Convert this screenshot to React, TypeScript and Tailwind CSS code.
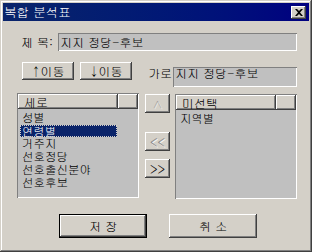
import React from 'react';

const raised =
  'bg-[#d4d0c8] shadow-[inset_-1px_-1px_#404040,inset_1px_1px_#ffffff,inset_-2px_-2px_#808080,inset_2px_2px_#d4d0c8]';
const defaultBtn =
  'bg-[#d4d0c8] shadow-[inset_0_0_0_1px_#000000,inset_-2px_-2px_#404040,inset_2px_2px_#ffffff,inset_-3px_-3px_#808080]';
const sunken = 'bg-[#c0c0c0] shadow-[inset_1px_1px_#808080,inset_-1px_-1px_#ffffff]';
const header =
  'bg-[#d4d0c8] shadow-[inset_-1px_-1px_#404040,inset_1px_1px_#ffffff,inset_-2px_-2px_#808080]';
const disabledText = 'text-[#808080] [text-shadow:1px_1px_0_#ffffff]';

const leftItems = ['성별', '연령별', '거주지', '선호정당', '선호출신분야', '선호후보'];

const ListBox = ({ title, items, selected }: { title: string; items: string[]; selected?: number }) => {
  return <div className={`w-[122px] h-[105px] flex flex-col pl-[1px] pt-[1px] ${sunken}`}>
      <div className="flex h-[15px] shrink-0">
        <div className={`w-[100px] h-[15px] pl-[6px] leading-[15px] ${header}`}>{title}</div>
        <div className={`w-[20px] h-[15px] ${header}`} />
      </div>
      <div className="pt-[2px] flex flex-col">
        {items.map((item, i) => <div key={item} className="h-[13px] flex items-center">
            {i === selected ? <div className="ml-[2px] w-[97px] h-[12px] bg-[#0a246a] text-white text-[11.5px] leading-[12px] pl-[2px] outline-1 outline-dotted outline-[#d4d0c8] -outline-offset-1">
                {item}
              </div> : <div className="pl-[4px] text-[11.5px] leading-[13px]">{item}</div>}
          </div>)}
      </div>
    </div>;
};

export default function App() {
  return <div className="w-[312px] h-[252px] bg-[#d4d0c8] p-[3px] flex flex-col text-[12px] text-black font-['Gulim','Noto_Sans_CJK_KR',sans-serif] shadow-[inset_-1px_-1px_#404040,inset_1px_1px_#d4d0c8,inset_-2px_-2px_#808080,inset_2px_2px_#ffffff]">
      {/* title bar */}
      <div className="h-[18px] flex items-center bg-gradient-to-r from-[#0a246a] to-[#000080] pl-[1px] pr-[3px]">
        <span className="text-white text-[12.5px] leading-[18px]">복합 분석표</span>
        <div className={`ml-auto w-[15px] h-[13px] flex items-center justify-center ${raised}`}>
          <svg width="8" height="7" viewBox="0 0 8 7">
            <path d="M0 0h2l2 2 2-2h2L5 3.5 8 7H6L4 5 2 7H0l3-3.5z" fill="#000" />
          </svg>
        </div>
      </div>

      {/* 제목 */}
      <div className="flex items-center mt-[12px] pl-[18px] h-[18px]">
        <span className="w-[37px] leading-[18px]">제 목:</span>
        <div className={`w-[239px] h-[18px] pl-[2px] leading-[17px] ${sunken}`}>지지 정당-후보</div>
      </div>

      {/* 이동 + 가로 */}
      <div className="flex items-start mt-[11px]">
        <button className={`ml-[19px] w-[52px] h-[18px] leading-[18px] ${raised}`}>↑이동</button>
        <button className={`ml-[6px] w-[52px] h-[18px] leading-[18px] ${raised}`}>↓이동</button>
        <span className="ml-[16px] w-[24px] mt-[4px] leading-[14px]">가로</span>
        <div className={`ml-[1px] mt-[5px] w-[124px] h-[20px] pl-[2px] leading-[12px] ${sunken}`}>지지 정당-후보</div>
      </div>

      {/* lists */}
      <div className="flex items-start mt-[6px]">
        <div className="ml-[14px]">
          <ListBox title="세로" items={leftItems} selected={1} />
        </div>
        <div className="ml-[6px] w-[25px] flex flex-col">
          <button className={`mt-[1px] w-[25px] h-[19px] leading-[19px] ${raised} ${disabledText}`}>∧</button>
          <button className={`mt-[19px] w-[25px] h-[19px] leading-[19px] ${raised} ${disabledText}`}>{'<<'}</button>
          <button className={`mt-[8px] w-[25px] h-[19px] leading-[19px] ${raised}`}>{'>>'}</button>
        </div>
        <div className="ml-[5px] mt-[1px]">
          <ListBox title="미선택" items={['지역별']} />
        </div>
      </div>

      {/* 저장 / 취소 */}
      <div className="flex mt-[15px]">
        <button className={`ml-[56px] w-[88px] h-[24px] leading-[24px] ${defaultBtn}`}>저 장</button>
        <button className={`ml-[22px] w-[88px] h-[24px] leading-[24px] ${raised}`}>취 소</button>
      </div>
    </div>;
}
